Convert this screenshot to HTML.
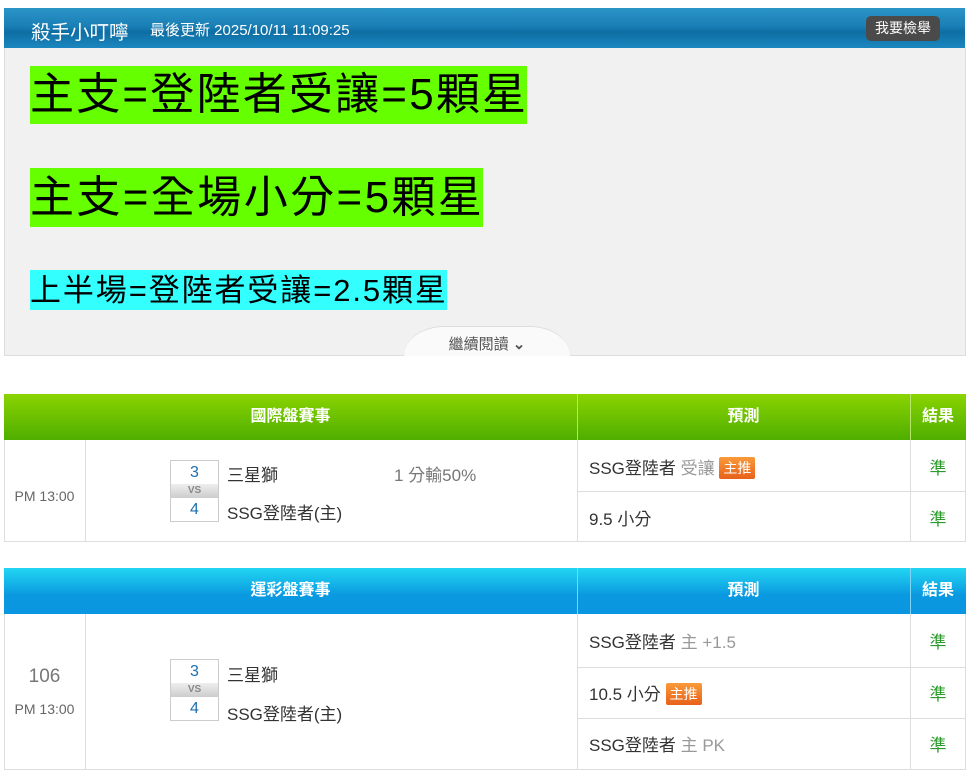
<!DOCTYPE html>
<html><head><meta charset="utf-8"><style>
*{margin:0;padding:0;box-sizing:border-box}
body{width:968px;height:772px;background:#fff;font-family:"Liberation Sans","Noto Sans CJK TC",sans-serif;position:relative;overflow:hidden;color:#333}
.a{position:absolute}
.hdr{left:4px;top:8px;width:961px;height:40px;background:linear-gradient(#2b95c8,#1a7fb6 45%,#0e6ea3 60%,#1b87bf);color:#fff}
.box{left:4px;top:48px;width:962px;height:308px;background:#f1f1f1;border:1px solid #ddd;border-top:none}
.hl{left:30px;color:#000;white-space:nowrap}
.tab{left:404px;top:326px;width:166px;height:30px;background:#fafafa;border-radius:40px 40px 0 0/30px 30px 0 0;border-top:1px solid #ddd;text-align:center;font-size:15px;color:#555;padding-top:6px}
.th{color:#fff;font-weight:bold;font-size:16px;text-align:center;line-height:46px}
.vl{width:1px;background:#ddd}
.hlin{height:1px;background:#ddd}
.sb{width:49px;border:1px solid #ccc;background:#fff}
.sb div{height:23px;text-align:center;color:#1a6fb0;font-size:16px;line-height:23px}
.sb .vs{height:14px;background:linear-gradient(#eee,#ccc);color:#888;font-size:10px;font-weight:bold;line-height:14px}
.t{font-size:17px;color:#333;white-space:nowrap}
.tag{display:inline-block;background:linear-gradient(#f99a3a,#e8601a);color:#fff;font-size:14px;padding:0 4px;line-height:22px;border-radius:2px;vertical-align:1px}
.g{color:#999}
.ok{color:#2a9a2a;font-size:17px;width:56px;text-align:center}
</style></head><body>
<div class="a hdr"><span class="a" style="left:27px;top:8px;font-size:19.5px">殺手小叮嚀</span><span class="a" style="left:146px;top:11px;font-size:15px">最後更新 2025/10/11 11:09:25</span>
<span class="a" style="left:862px;top:8px;width:74px;height:25px;background:#4a4a4a;border-radius:5px;font-size:14px;text-align:center;line-height:25px">我要檢舉</span></div>
<div class="a box"></div>
<div class="a hl" style="top:66px;height:58px;width:497px;background:#66ff00;font-size:44px;line-height:58px;letter-spacing:2.2px">主支=登陸者受讓=5顆星</div>
<div class="a hl" style="top:168px;height:59px;width:453px;background:#66ff00;font-size:44px;line-height:59px;letter-spacing:2.4px">主支=全場小分=5顆星</div>
<div class="a hl" style="top:270px;height:40px;width:417px;background:#33ffff;font-size:31px;line-height:42px;letter-spacing:1.9px">上半場=登陸者受讓=2.5顆星</div>
<div class="a tab">繼續閱讀 <b>⌄</b></div>

<!-- table1 -->
<div class="a" style="left:4px;top:394px;width:962px;height:148px;border:1px solid #ddd;border-top:none"></div>
<div class="a th" style="left:4px;top:394px;width:962px;height:46px;background:linear-gradient(#8ad400,#4fae00)"></div>
<div class="a th" style="left:4px;top:394px;width:573px">國際盤賽事</div>
<div class="a th" style="left:577px;top:394px;width:333px">預測</div>
<div class="a th" style="left:910px;top:394px;width:56px">結果</div>
<div class="a" style="left:577px;top:394px;width:1px;height:46px;background:#b6e56a"></div>
<div class="a" style="left:910px;top:394px;width:1px;height:46px;background:#b6e56a"></div>
<div class="a vl" style="left:85px;top:440px;height:102px"></div>
<div class="a vl" style="left:577px;top:440px;height:102px"></div>
<div class="a vl" style="left:910px;top:440px;height:102px"></div>
<div class="a hlin" style="left:577px;top:491px;width:389px"></div>
<div class="a" style="left:4px;top:488px;width:81px;text-align:center;font-size:14px;color:#666">PM 13:00</div>
<div class="a sb" style="left:170px;top:460px"><div>3</div><div class="vs">VS</div><div>4</div></div>
<div class="a t" style="left:227px;top:461px">三星獅</div>
<div class="a t" style="left:394px;top:461px;color:#777">1 分輸50%</div>
<div class="a t" style="left:227px;top:499px">SSG登陸者(主)</div>
<div class="a t" style="left:589px;top:454px">SSG登陸者 <span class="g">受讓</span> <span class="tag">主推</span></div>
<div class="a t" style="left:589px;top:505px">9.5 小分</div>
<div class="a ok" style="left:910px;top:454px">準</div>
<div class="a ok" style="left:910px;top:505px">準</div>

<!-- table2 -->
<div class="a" style="left:4px;top:568px;width:962px;height:202px;border:1px solid #ddd;border-top:none"></div>
<div class="a th" style="left:4px;top:568px;width:962px;height:46px;background:linear-gradient(#22d6f2,#0a98e0 60%,#0a96e0)"></div>
<div class="a th" style="left:4px;top:568px;width:573px">運彩盤賽事</div>
<div class="a th" style="left:577px;top:568px;width:333px">預測</div>
<div class="a th" style="left:910px;top:568px;width:56px">結果</div>
<div class="a" style="left:577px;top:568px;width:1px;height:46px;background:#7fd3f4"></div>
<div class="a" style="left:910px;top:568px;width:1px;height:46px;background:#7fd3f4"></div>
<div class="a vl" style="left:85px;top:614px;height:156px"></div>
<div class="a vl" style="left:577px;top:614px;height:156px"></div>
<div class="a vl" style="left:910px;top:614px;height:156px"></div>
<div class="a hlin" style="left:577px;top:667px;width:389px"></div>
<div class="a hlin" style="left:577px;top:718px;width:389px"></div>
<div class="a" style="left:4px;top:666px;width:81px;text-align:center;font-size:19px;color:#777">106</div>
<div class="a" style="left:4px;top:701px;width:81px;text-align:center;font-size:14px;color:#666">PM 13:00</div>
<div class="a sb" style="left:170px;top:659px"><div>3</div><div class="vs">VS</div><div>4</div></div>
<div class="a t" style="left:227px;top:661px">三星獅</div>
<div class="a t" style="left:227px;top:700px">SSG登陸者(主)</div>
<div class="a t" style="left:589px;top:628px">SSG登陸者 <span class="g">主 +1.5</span></div>
<div class="a t" style="left:589px;top:680px">10.5 小分 <span class="tag">主推</span></div>
<div class="a t" style="left:589px;top:731px">SSG登陸者 <span class="g">主 PK</span></div>
<div class="a ok" style="left:910px;top:628px">準</div>
<div class="a ok" style="left:910px;top:680px">準</div>
<div class="a ok" style="left:910px;top:731px">準</div>
</body></html>
